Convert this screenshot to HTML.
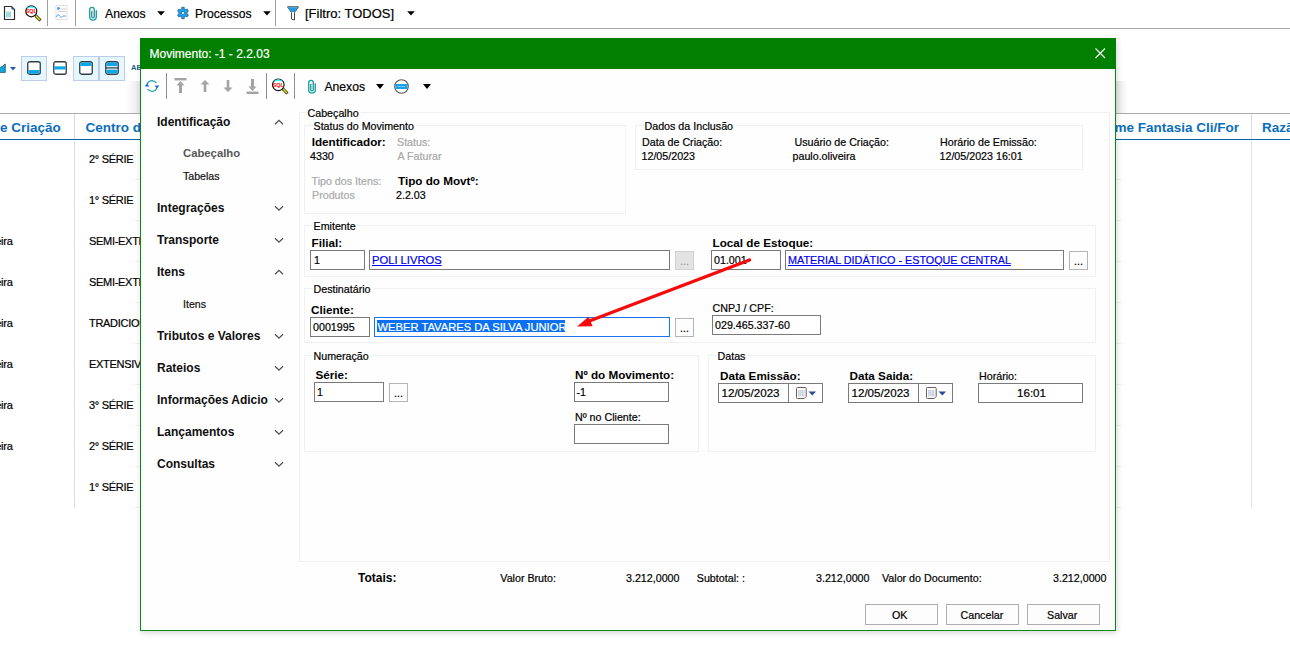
<!DOCTYPE html>
<html><head><meta charset="utf-8">
<style>
html,body{margin:0;padding:0;}
body{width:1290px;height:667px;overflow:hidden;position:relative;background:#fff;font-family:"Liberation Sans", sans-serif;}
.t{position:absolute;white-space:pre;line-height:1;-webkit-text-stroke:0.2px currentColor;}
.r{position:absolute;box-sizing:border-box;}
</style></head><body>
<div class="r" style="left:47px;top:0px;width:1px;height:26px;background:#a0a0a0"></div>
<div class="r" style="left:75px;top:0px;width:1px;height:26px;background:#a0a0a0"></div>
<div class="r" style="left:275px;top:0px;width:1px;height:26px;background:#a0a0a0"></div>
<div class="r" style="left:0px;top:28px;width:1290px;height:1px;background:#a9a9a9"></div>
<div class="t" style="left:105px;top:7.67px;font-size:12.2px;font-weight:normal;color:#000;">Anexos</div>
<div class="t" style="left:195px;top:7.76px;font-size:12.1px;font-weight:normal;color:#000;">Processos</div>
<div class="t" style="left:305px;top:6.60px;font-size:13px;font-weight:normal;color:#000;">[Filtro: TODOS]</div>
<svg class="r" style="left:157px;top:11px" width="8" height="5"><path d="M0.2 0.3H7.8L4 4.6Z" fill="#000"/></svg>
<svg class="r" style="left:263px;top:11px" width="8" height="5"><path d="M0.2 0.3H7.8L4 4.6Z" fill="#000"/></svg>
<svg class="r" style="left:407px;top:11px" width="8" height="5"><path d="M0.2 0.3H7.8L4 4.6Z" fill="#000"/></svg>
<div class="r" style="left:0px;top:113px;width:1290px;height:1px;background:#ababab"></div>
<div class="r" style="left:0px;top:139px;width:1290px;height:1px;background:#0562a8"></div>
<div class="r" style="left:74px;top:114px;width:1px;height:25px;background:#dadada"></div>
<div class="r" style="left:74px;top:141px;width:1px;height:367px;background:#dedede"></div>
<div class="r" style="left:1251px;top:114px;width:1px;height:25px;background:#dadada"></div>
<div class="r" style="left:1251px;top:141px;width:1px;height:367px;background:#e4e4e4"></div>
<div class="t" style="left:0px;top:120.57px;font-size:13.5px;font-weight:bold;color:#0a6ebd;-webkit-text-stroke:0;">e Criação</div>
<div class="t" style="left:85.5px;top:120.57px;font-size:13.5px;font-weight:bold;color:#0a6ebd;-webkit-text-stroke:0;">Centro de Custo</div>
<div class="t" style="left:1106.2px;top:120.57px;font-size:13.5px;font-weight:bold;color:#0a6ebd;-webkit-text-stroke:0;">ome Fantasia Cli/For</div>
<div class="t" style="left:1262px;top:120.57px;font-size:13.5px;font-weight:bold;color:#0a6ebd;-webkit-text-stroke:0;">Razão</div>
<div class="t" style="left:89px;top:153.69px;font-size:11px;font-weight:normal;color:#000;letter-spacing:-0.3px;">2° SÉRIE</div>
<div class="t" style="left:89px;top:194.69px;font-size:11px;font-weight:normal;color:#000;letter-spacing:-0.3px;">1° SÉRIE</div>
<div class="t" style="left:89px;top:235.69px;font-size:11px;font-weight:normal;color:#000;letter-spacing:-0.3px;">SEMI-EXTENSIVO</div>
<div class="t" style="left:-20px;top:235.69px;font-size:11px;font-weight:normal;color:#000;letter-spacing:-0.3px;">oliveira</div>
<div class="t" style="left:89px;top:276.69px;font-size:11px;font-weight:normal;color:#000;letter-spacing:-0.3px;">SEMI-EXTENSIVO</div>
<div class="t" style="left:-20px;top:276.69px;font-size:11px;font-weight:normal;color:#000;letter-spacing:-0.3px;">oliveira</div>
<div class="t" style="left:89px;top:317.69px;font-size:11px;font-weight:normal;color:#000;letter-spacing:-0.3px;">TRADICIONAL</div>
<div class="t" style="left:-20px;top:317.69px;font-size:11px;font-weight:normal;color:#000;letter-spacing:-0.3px;">oliveira</div>
<div class="t" style="left:89px;top:358.69px;font-size:11px;font-weight:normal;color:#000;letter-spacing:-0.3px;">EXTENSIVO</div>
<div class="t" style="left:-20px;top:358.69px;font-size:11px;font-weight:normal;color:#000;letter-spacing:-0.3px;">oliveira</div>
<div class="t" style="left:89px;top:399.69px;font-size:11px;font-weight:normal;color:#000;letter-spacing:-0.3px;">3° SÉRIE</div>
<div class="t" style="left:-20px;top:399.69px;font-size:11px;font-weight:normal;color:#000;letter-spacing:-0.3px;">oliveira</div>
<div class="t" style="left:89px;top:440.69px;font-size:11px;font-weight:normal;color:#000;letter-spacing:-0.3px;">2° SÉRIE</div>
<div class="t" style="left:-20px;top:440.69px;font-size:11px;font-weight:normal;color:#000;letter-spacing:-0.3px;">oliveira</div>
<div class="t" style="left:89px;top:481.69px;font-size:11px;font-weight:normal;color:#000;letter-spacing:-0.3px;">1° SÉRIE</div>
<div class="r" style="left:128px;top:179px;width:12px;height:1px;background:linear-gradient(90deg,rgba(0,0,0,0),rgba(0,0,0,0.07))"></div>
<div class="r" style="left:1116px;top:179px;width:12px;height:1px;background:linear-gradient(90deg,rgba(0,0,0,0.07),rgba(0,0,0,0))"></div>
<div class="r" style="left:128px;top:220px;width:12px;height:1px;background:linear-gradient(90deg,rgba(0,0,0,0),rgba(0,0,0,0.07))"></div>
<div class="r" style="left:1116px;top:220px;width:12px;height:1px;background:linear-gradient(90deg,rgba(0,0,0,0.07),rgba(0,0,0,0))"></div>
<div class="r" style="left:128px;top:261px;width:12px;height:1px;background:linear-gradient(90deg,rgba(0,0,0,0),rgba(0,0,0,0.07))"></div>
<div class="r" style="left:1116px;top:261px;width:12px;height:1px;background:linear-gradient(90deg,rgba(0,0,0,0.07),rgba(0,0,0,0))"></div>
<div class="r" style="left:128px;top:302px;width:12px;height:1px;background:linear-gradient(90deg,rgba(0,0,0,0),rgba(0,0,0,0.07))"></div>
<div class="r" style="left:1116px;top:302px;width:12px;height:1px;background:linear-gradient(90deg,rgba(0,0,0,0.07),rgba(0,0,0,0))"></div>
<div class="r" style="left:128px;top:343px;width:12px;height:1px;background:linear-gradient(90deg,rgba(0,0,0,0),rgba(0,0,0,0.07))"></div>
<div class="r" style="left:1116px;top:343px;width:12px;height:1px;background:linear-gradient(90deg,rgba(0,0,0,0.07),rgba(0,0,0,0))"></div>
<div class="r" style="left:128px;top:384px;width:12px;height:1px;background:linear-gradient(90deg,rgba(0,0,0,0),rgba(0,0,0,0.07))"></div>
<div class="r" style="left:1116px;top:384px;width:12px;height:1px;background:linear-gradient(90deg,rgba(0,0,0,0.07),rgba(0,0,0,0))"></div>
<div class="r" style="left:128px;top:425px;width:12px;height:1px;background:linear-gradient(90deg,rgba(0,0,0,0),rgba(0,0,0,0.07))"></div>
<div class="r" style="left:1116px;top:425px;width:12px;height:1px;background:linear-gradient(90deg,rgba(0,0,0,0.07),rgba(0,0,0,0))"></div>
<div class="r" style="left:128px;top:466px;width:12px;height:1px;background:linear-gradient(90deg,rgba(0,0,0,0),rgba(0,0,0,0.07))"></div>
<div class="r" style="left:1116px;top:466px;width:12px;height:1px;background:linear-gradient(90deg,rgba(0,0,0,0.07),rgba(0,0,0,0))"></div>
<div class="r" style="left:128px;top:507px;width:12px;height:1px;background:linear-gradient(90deg,rgba(0,0,0,0),rgba(0,0,0,0.07))"></div>
<div class="r" style="left:1116px;top:507px;width:12px;height:1px;background:linear-gradient(90deg,rgba(0,0,0,0.07),rgba(0,0,0,0))"></div>
<svg class="r" style="left:3px;top:5px" width="13" height="16" viewBox="0 0 13 16"><path d="M1.5 1.5H8.5L11.5 4.5V14.5H1.5Z" fill="#fff" stroke="#2b2b2b" stroke-width="1.2"/><path d="M8.5 1.5V4.5H11.5Z" fill="#1560b0"/><rect x="3" y="6.5" width="5" height="6" fill="#9fdcdc"/></svg>
<svg class="r" style="left:24px;top:5px" width="18" height="17" viewBox="0 0 18 17"><path d="M11.5 10.5L16.5 15.5" stroke="#222" stroke-width="3"/><path d="M11.8 10.8L16 15" stroke="#f2e200" stroke-width="1.6"/><circle cx="7.3" cy="6.3" r="5.5" fill="#fff" stroke="#111" stroke-width="1.2"/><path d="M3 3.3Q7.3 0.3 11.6 3.3" stroke="#2ee6f0" stroke-width="1.3" fill="none"/><text x="7.3" y="8.4" font-size="5.4" font-weight="bold" fill="#f00" text-anchor="middle" font-family="Liberation Sans">SQL</text></svg>
<svg class="r" style="left:55px;top:4px" width="13" height="17" viewBox="0 0 13 17"><rect x="1" y="1.5" width="11" height="14" fill="none" stroke="#e0e0e0"/><circle cx="3.5" cy="4.5" r="1.4" fill="#4aa0f0"/><path d="M5.5 5H11M3 7.5H11" stroke="#cfcfcf"/><path d="M1 13Q3 9 4.5 12T8 12H11" stroke="#5aa8f0" fill="none"/></svg>
<svg class="r" style="left:88px;top:6px" width="10" height="15" viewBox="0 0 10 15"><path d="M8.3 4.2V10.8A3.3 3.3 0 0 1 1.7 10.8V3.6A2.3 2.3 0 0 1 6.3 3.6V10.6A1.3 1.3 0 0 1 3.7 10.6V5" stroke="#17a0a0" stroke-width="1.35" fill="none"/><path d="M5 3.2V11" stroke="#d8b8b8" stroke-width="0.8"/></svg>
<svg class="r" style="left:176px;top:6px" width="14" height="14" viewBox="-0.8 -0.8 15.6 15.6"><g fill="#16a4f4" stroke="#0d3550" stroke-width="0.6"><path d="M5.6 0.6H8.4V2.4L10.2 3.4L11.7 2.5L13.1 4.9L11.6 5.8V8.2L13.1 9.1L11.7 11.5L10.2 10.6L8.4 11.6V13.4H5.6V11.6L3.8 10.6L2.3 11.5L0.9 9.1L2.4 8.2V5.8L0.9 4.9L2.3 2.5L3.8 3.4L5.6 2.4Z"/></g><circle cx="7" cy="7" r="1.7" fill="#fff" stroke="#2a3a40" stroke-width="0.6"/></svg>
<svg class="r" style="left:287px;top:6px" width="12" height="15" viewBox="0 0 12 15"><path d="M0.5 0.8H11.5L7.5 6.5V14L4.5 13V6.5Z" fill="#fff" stroke="#444" stroke-width="1"/><path d="M1 1.3H11L7.6 6H4.4Z" fill="#1e9be8"/></svg>
<svg class="r" style="left:0px;top:63px" width="7" height="12" viewBox="0 0 7 12"><path d="M-1 4.8L2.2 3.6L5.3 1V9.4H-1Z" fill="#10a8e0" stroke="#244050" stroke-width="0.7"/></svg>
<svg class="r" style="left:10px;top:67px" width="6" height="4"><path d="M0 0H6L3 3.5Z" fill="#1d5fa8"/></svg>
<div class="r" style="left:21px;top:56px;width:26px;height:25px;background:#e6f6fd;border:1px solid #bccbeb"></div>
<div class="r" style="left:73px;top:56px;width:26px;height:25px;background:#e6f6fd;border:1px solid #bccbeb"></div>
<div class="r" style="left:99px;top:56px;width:26px;height:25px;background:#e6f6fd;border:1px solid #bccbeb"></div>
<svg class="r" style="left:27px;top:61px" width="14" height="14" viewBox="0 0 14 14"><rect x="0.75" y="0.75" width="12.5" height="12.5" rx="2" fill="#fff" stroke="#2f3e46" stroke-width="1.3"/><rect x="1.4" y="9" width="11.2" height="3.7" fill="#12a6e6"/></svg>
<svg class="r" style="left:53px;top:61px" width="14" height="14" viewBox="0 0 14 14"><rect x="0.75" y="0.75" width="12.5" height="12.5" rx="2" fill="#fff" stroke="#2f3e46" stroke-width="1.3"/><rect x="1.4" y="5.3" width="11.2" height="3.2" fill="#12a6e6"/></svg>
<svg class="r" style="left:79px;top:61px" width="14" height="14" viewBox="0 0 14 14"><rect x="0.75" y="0.75" width="12.5" height="12.5" rx="2" fill="#fff" stroke="#2f3e46" stroke-width="1.3"/><rect x="1.4" y="1.4" width="11.2" height="3.6" fill="#12a6e6"/></svg>
<svg class="r" style="left:105px;top:61px" width="14" height="14" viewBox="0 0 14 14"><rect x="0.75" y="0.75" width="12.5" height="12.5" rx="2.5" fill="#fff" stroke="#2f3e46" stroke-width="1.3"/><rect x="1.4" y="1.4" width="11.2" height="3.8" fill="#12a6e6"/><rect x="1.4" y="8.6" width="11.2" height="3.8" fill="#12a6e6"/><path d="M1 6.9H13" stroke="#2f3e46" stroke-width="1.3"/></svg>
<div class="t" style="left:131px;top:64.15px;font-size:7.5px;font-weight:bold;color:#1a5f90;-webkit-text-stroke:0;">AB</div>
<div class="r" style="left:126px;top:81px;width:14px;height:32px;background:linear-gradient(90deg,rgba(0,0,0,0),rgba(0,0,0,0.09))"></div>
<div class="r" style="left:1116px;top:81px;width:12px;height:32px;background:linear-gradient(90deg,rgba(0,0,0,0.1),rgba(0,0,0,0))"></div>
<div class="r" style="left:140px;top:38px;width:976px;height:593px;background:#fefefe;border:1px solid #0a8a16;box-shadow:1px 2px 6px rgba(0,0,0,0.16)"></div>
<div class="r" style="left:140px;top:38px;width:976px;height:31px;background:#007f00"></div>
<div class="t" style="left:149.5px;top:47.84px;font-size:12px;font-weight:normal;color:#fff;">Movimento: -1 - 2.2.03</div>
<svg class="r" style="left:1095px;top:48px" width="11" height="11" viewBox="0 0 11 11"><path d="M0.5 0.5L10 10M10 0.5L0.5 10" stroke="#fff" stroke-width="1.1"/></svg>
<div class="r" style="left:166px;top:73px;width:1px;height:26px;background:#8f8f8f"></div>
<div class="r" style="left:266px;top:73px;width:1px;height:26px;background:#8f8f8f"></div>
<div class="r" style="left:294px;top:73px;width:1px;height:26px;background:#8f8f8f"></div>
<svg class="r" style="left:144px;top:79px" width="16" height="14" viewBox="0 0 16 14"><path d="M3 6.5Q3.5 1.8 8 1.6Q10.8 1.6 12.4 4M13 7.5Q12.5 12.2 8 12.4Q5.2 12.4 3.6 10" stroke="#1aa3a8" stroke-width="1.3" fill="none"/><path d="M0.6 7.6H5.4L3 4.6Z" fill="#1a6fd0"/><path d="M10.6 6.4H15.4L13 9.4Z" fill="#1a6fd0"/></svg>
<svg class="r" style="left:174px;top:78px" width="13" height="16" viewBox="0 0 13 16"><rect x="0.5" y="0" width="12" height="2.4" fill="#a3a3a3"/><path d="M6.5 3L10.5 7.5H8V15H5V7.5H2.5Z" fill="#a3a3a3"/></svg>
<svg class="r" style="left:200px;top:80px" width="10" height="12" viewBox="0 0 10 12"><path d="M5 0L9.5 4.5H6.3V12H3.7V4.5H0.5Z" fill="#a3a3a3"/></svg>
<svg class="r" style="left:223px;top:80px" width="10" height="12" viewBox="0 0 10 12"><path d="M5 12L9.5 7.5H6.3V0H3.7V7.5H0.5Z" fill="#a3a3a3"/></svg>
<svg class="r" style="left:246px;top:79px" width="13" height="16" viewBox="0 0 13 16"><rect x="0.5" y="12.6" width="12" height="2.4" fill="#a3a3a3"/><path d="M6.5 12L10.5 7.5H8V0H5V7.5H2.5Z" fill="#a3a3a3"/></svg>
<svg class="r" style="left:271px;top:78px" width="18" height="17" viewBox="0 0 18 17"><path d="M11.5 10.5L16.5 15.5" stroke="#222" stroke-width="3"/><path d="M11.8 10.8L16 15" stroke="#f2e200" stroke-width="1.6"/><circle cx="7.3" cy="6.8" r="5.8" fill="#fff" stroke="#111" stroke-width="1.2"/><path d="M3 3.5Q7.3 0.5 11.6 3.5" stroke="#2ee6f0" stroke-width="1.3" fill="none"/><text x="7.3" y="8.8" font-size="5.4" font-weight="bold" fill="#f00" text-anchor="middle" font-family="Liberation Sans">SQL</text></svg>
<svg class="r" style="left:307px;top:79px" width="10" height="15" viewBox="0 0 10 15"><path d="M8.3 4.2V10.8A3.3 3.3 0 0 1 1.7 10.8V3.6A2.3 2.3 0 0 1 6.3 3.6V10.6A1.3 1.3 0 0 1 3.7 10.6V5" stroke="#17a0a0" stroke-width="1.35" fill="none"/><path d="M5 3.2V11" stroke="#d8b8b8" stroke-width="0.8"/></svg>
<div class="t" style="left:324.4px;top:80.67px;font-size:12.2px;font-weight:normal;color:#000;">Anexos</div>
<svg class="r" style="left:376px;top:84px" width="8" height="5"><path d="M0 0H8L4 5Z" fill="#000"/></svg>
<svg class="r" style="left:394px;top:79px" width="15" height="15" viewBox="0 0 15 15"><circle cx="7.5" cy="7.5" r="6.8" fill="#fff" stroke="#555" stroke-width="1.1"/><rect x="1.5" y="5" width="12" height="5" fill="#1aa0e8"/><path d="M3.5 7.5H11.5" stroke="#cfefff" stroke-width="0.8" stroke-dasharray="1 0.6"/></svg>
<svg class="r" style="left:423px;top:84px" width="8" height="5"><path d="M0 0H8L4 5Z" fill="#000"/></svg>
<div class="t" style="left:157px;top:115.84px;font-size:12px;font-weight:bold;color:#101010;-webkit-text-stroke:0;">Identificação</div>
<svg class="r" style="left:274px;top:119px" width="10" height="7" viewBox="0 0 10 7"><path d="M1 5.3L5 1.3L9 5.3" stroke="#505050" stroke-width="1.3" fill="none"/></svg>
<div class="t" style="left:183px;top:148.43px;font-size:11.3px;font-weight:bold;color:#585858;-webkit-text-stroke:0;">Cabeçalho</div>
<div class="t" style="left:183px;top:171.03px;font-size:10.6px;font-weight:normal;color:#101010;">Tabelas</div>
<div class="t" style="left:157px;top:201.84px;font-size:12px;font-weight:bold;color:#101010;-webkit-text-stroke:0;">Integrações</div>
<svg class="r" style="left:274px;top:205px" width="10" height="7" viewBox="0 0 10 7"><path d="M1 1.2L5 5.2L9 1.2" stroke="#505050" stroke-width="1.3" fill="none"/></svg>
<div class="t" style="left:157px;top:233.84px;font-size:12px;font-weight:bold;color:#101010;-webkit-text-stroke:0;">Transporte</div>
<svg class="r" style="left:274px;top:237px" width="10" height="7" viewBox="0 0 10 7"><path d="M1 1.2L5 5.2L9 1.2" stroke="#505050" stroke-width="1.3" fill="none"/></svg>
<div class="t" style="left:157px;top:265.84px;font-size:12px;font-weight:bold;color:#101010;-webkit-text-stroke:0;">Itens</div>
<svg class="r" style="left:274px;top:269px" width="10" height="7" viewBox="0 0 10 7"><path d="M1 5.3L5 1.3L9 5.3" stroke="#505050" stroke-width="1.3" fill="none"/></svg>
<div class="t" style="left:183px;top:299.03px;font-size:10.6px;font-weight:normal;color:#101010;">Itens</div>
<div class="t" style="left:157px;top:329.84px;font-size:12px;font-weight:bold;color:#101010;-webkit-text-stroke:0;">Tributos e Valores</div>
<svg class="r" style="left:274px;top:333px" width="10" height="7" viewBox="0 0 10 7"><path d="M1 1.2L5 5.2L9 1.2" stroke="#505050" stroke-width="1.3" fill="none"/></svg>
<div class="t" style="left:157px;top:361.84px;font-size:12px;font-weight:bold;color:#101010;-webkit-text-stroke:0;">Rateios</div>
<svg class="r" style="left:274px;top:365px" width="10" height="7" viewBox="0 0 10 7"><path d="M1 1.2L5 5.2L9 1.2" stroke="#505050" stroke-width="1.3" fill="none"/></svg>
<div class="t" style="left:157px;top:393.84px;font-size:12px;font-weight:bold;color:#101010;-webkit-text-stroke:0;">Informações Adicio</div>
<svg class="r" style="left:274px;top:397px" width="10" height="7" viewBox="0 0 10 7"><path d="M1 1.2L5 5.2L9 1.2" stroke="#505050" stroke-width="1.3" fill="none"/></svg>
<div class="t" style="left:157px;top:425.84px;font-size:12px;font-weight:bold;color:#101010;-webkit-text-stroke:0;">Lançamentos</div>
<svg class="r" style="left:274px;top:429px" width="10" height="7" viewBox="0 0 10 7"><path d="M1 1.2L5 5.2L9 1.2" stroke="#505050" stroke-width="1.3" fill="none"/></svg>
<div class="t" style="left:157px;top:457.84px;font-size:12px;font-weight:bold;color:#101010;-webkit-text-stroke:0;">Consultas</div>
<svg class="r" style="left:274px;top:461px" width="10" height="7" viewBox="0 0 10 7"><path d="M1 1.2L5 5.2L9 1.2" stroke="#505050" stroke-width="1.3" fill="none"/></svg>
<div class="r" style="left:299px;top:112px;width:811px;height:450px;border:1px solid #f1f1f1"></div>
<div class="t" style="left:307.5px;top:107.94px;font-size:10.7px;font-weight:normal;color:#000;margin-left:-1px;"><span style="background:#fefefe;padding:0 2px 0 1px">Cabeçalho</span></div>
<div class="r" style="left:304px;top:125px;width:322px;height:89px;border:1px solid #f1f1f1"></div>
<div class="t" style="left:313.5px;top:120.94px;font-size:10.7px;font-weight:normal;color:#000;margin-left:-1px;"><span style="background:#fefefe;padding:0 2px 0 1px">Status do Movimento</span></div>
<div class="r" style="left:635px;top:125px;width:448px;height:45px;border:1px solid #f1f1f1"></div>
<div class="t" style="left:644.5px;top:120.94px;font-size:10.7px;font-weight:normal;color:#000;margin-left:-1px;"><span style="background:#fefefe;padding:0 2px 0 1px">Dados da Inclusão</span></div>
<div class="r" style="left:304px;top:225px;width:792px;height:52px;border:1px solid #f1f1f1"></div>
<div class="t" style="left:313.5px;top:220.94px;font-size:10.7px;font-weight:normal;color:#000;margin-left:-1px;"><span style="background:#fefefe;padding:0 2px 0 1px">Emitente</span></div>
<div class="r" style="left:304px;top:288px;width:792px;height:55px;border:1px solid #f1f1f1"></div>
<div class="t" style="left:313.5px;top:283.94px;font-size:10.7px;font-weight:normal;color:#000;margin-left:-1px;"><span style="background:#fefefe;padding:0 2px 0 1px">Destinatário</span></div>
<div class="r" style="left:304px;top:355px;width:395px;height:97px;border:1px solid #f1f1f1"></div>
<div class="t" style="left:313.5px;top:350.94px;font-size:10.7px;font-weight:normal;color:#000;margin-left:-1px;"><span style="background:#fefefe;padding:0 2px 0 1px">Numeração</span></div>
<div class="r" style="left:708px;top:355px;width:388px;height:97px;border:1px solid #f1f1f1"></div>
<div class="t" style="left:717.5px;top:350.94px;font-size:10.7px;font-weight:normal;color:#000;margin-left:-1px;"><span style="background:#fefefe;padding:0 2px 0 1px">Datas</span></div>
<div class="t" style="left:311.7px;top:136.10px;font-size:11.7px;font-weight:bold;color:#000;-webkit-text-stroke:0;">Identificador:</div>
<div class="t" style="left:310px;top:150.94px;font-size:10.7px;font-weight:normal;color:#000;">4330</div>
<div class="t" style="left:397px;top:136.94px;font-size:10.7px;font-weight:normal;color:#a8a8a8;">Status:</div>
<div class="t" style="left:397.5px;top:150.94px;font-size:10.7px;font-weight:normal;color:#a8a8a8;">A Faturar</div>
<div class="t" style="left:311.5px;top:175.94px;font-size:10.7px;font-weight:normal;color:#a8a8a8;">Tipo dos Itens:</div>
<div class="t" style="left:312px;top:189.94px;font-size:10.7px;font-weight:normal;color:#a8a8a8;">Produtos</div>
<div class="t" style="left:398px;top:175.10px;font-size:11.7px;font-weight:bold;color:#000;-webkit-text-stroke:0;">Tipo do Movtº:</div>
<div class="t" style="left:396px;top:189.94px;font-size:10.7px;font-weight:normal;color:#000;">2.2.03</div>
<div class="t" style="left:642px;top:136.94px;font-size:10.7px;font-weight:normal;color:#000;">Data de Criação:</div>
<div class="t" style="left:641.5px;top:150.94px;font-size:10.7px;font-weight:normal;color:#000;">12/05/2023</div>
<div class="t" style="left:794.5px;top:136.94px;font-size:10.7px;font-weight:normal;color:#000;">Usuário de Criação:</div>
<div class="t" style="left:792.5px;top:150.94px;font-size:10.7px;font-weight:normal;color:#000;">paulo.oliveira</div>
<div class="t" style="left:940px;top:136.94px;font-size:10.7px;font-weight:normal;color:#000;">Horário de Emissão:</div>
<div class="t" style="left:939.5px;top:150.94px;font-size:10.7px;font-weight:normal;color:#000;">12/05/2023 16:01</div>
<div class="t" style="left:311.5px;top:237.10px;font-size:11.7px;font-weight:bold;color:#000;-webkit-text-stroke:0;">Filial:</div>
<div class="r" style="left:310px;top:250px;width:55px;height:20px;background:#fff;border:1px solid #7a7a7a"></div>
<div class="t" style="left:314px;top:254.94px;font-size:10.7px;font-weight:normal;color:#000;">1</div>
<div class="r" style="left:369px;top:250px;width:301px;height:20px;background:#fff;border:1px solid #7a7a7a"></div>
<div class="t" style="left:372px;top:254.52px;font-size:11.2px;font-weight:normal;color:#0000ee;"><u>POLI LIVROS</u></div>
<div class="r" style="left:675px;top:251px;width:19px;height:19px;background:#e3e3e3;border:1px solid #d0d0d0"></div>
<div class="t" style="left:680px;top:255.94px;font-size:10.7px;font-weight:normal;color:#9a9a9a;">...</div>
<div class="t" style="left:712.5px;top:237.10px;font-size:11.7px;font-weight:bold;color:#000;-webkit-text-stroke:0;">Local de Estoque:</div>
<div class="r" style="left:711px;top:250px;width:70px;height:20px;background:#fff;border:1px solid #7a7a7a"></div>
<div class="t" style="left:714px;top:254.94px;font-size:10.7px;font-weight:normal;color:#000;">01.001</div>
<div class="r" style="left:785px;top:250px;width:279px;height:20px;background:#fff;border:1px solid #7a7a7a"></div>
<div class="t" style="left:788px;top:254.86px;font-size:10.8px;font-weight:normal;color:#0000ee;"><u>MATERIAL DIDÁTICO - ESTOQUE CENTRAL</u></div>
<div class="r" style="left:1069px;top:251px;width:19px;height:19px;background:#fdfdfd;border:1px solid #b4b4b4"></div>
<div class="t" style="left:1074px;top:255.94px;font-size:10.7px;font-weight:normal;color:#000;">...</div>
<div class="t" style="left:311px;top:304.10px;font-size:11.7px;font-weight:bold;color:#000;-webkit-text-stroke:0;">Cliente:</div>
<div class="r" style="left:310px;top:317px;width:60px;height:20px;background:#fff;border:1px solid #7a7a7a"></div>
<div class="t" style="left:313px;top:321.94px;font-size:10.7px;font-weight:normal;color:#000;">0001995</div>
<div class="r" style="left:374px;top:317px;width:296px;height:20px;background:#fff;border:1px solid #1a74f0"></div>
<div class="r" style="left:377px;top:320px;width:188px;height:12px;background:#0a6ff2"></div>
<div class="t" style="left:377.5px;top:321.52px;font-size:11.2px;font-weight:normal;color:#fff;">WEBER TAVARES DA SILVA JUNIOR</div>
<div class="r" style="left:675px;top:318px;width:19px;height:19px;background:#fdfdfd;border:1px solid #b4b4b4"></div>
<div class="t" style="left:680px;top:322.94px;font-size:10.7px;font-weight:normal;color:#000;">...</div>
<div class="t" style="left:712.5px;top:302.94px;font-size:10.7px;font-weight:normal;color:#000;">CNPJ / CPF:</div>
<div class="r" style="left:712px;top:315px;width:109px;height:20px;background:#fff;border:1px solid #7a7a7a"></div>
<div class="t" style="left:715px;top:319.94px;font-size:10.7px;font-weight:normal;color:#000;">029.465.337-60</div>
<div class="t" style="left:315.5px;top:369.10px;font-size:11.7px;font-weight:bold;color:#000;-webkit-text-stroke:0;">Série:</div>
<div class="r" style="left:314px;top:382px;width:70px;height:20px;background:#fff;border:1px solid #7a7a7a"></div>
<div class="t" style="left:317px;top:386.94px;font-size:10.7px;font-weight:normal;color:#000;">1</div>
<div class="r" style="left:389px;top:383px;width:19px;height:19px;background:#fdfdfd;border:1px solid #b4b4b4"></div>
<div class="t" style="left:394px;top:387.94px;font-size:10.7px;font-weight:normal;color:#000;">...</div>
<div class="t" style="left:575px;top:369.10px;font-size:11.7px;font-weight:bold;color:#000;-webkit-text-stroke:0;">Nº do Movimento:</div>
<div class="r" style="left:574px;top:382px;width:95px;height:20px;background:#fff;border:1px solid #7a7a7a"></div>
<div class="t" style="left:576.5px;top:386.94px;font-size:10.7px;font-weight:normal;color:#000;">-1</div>
<div class="t" style="left:575px;top:411.94px;font-size:10.7px;font-weight:normal;color:#000;">Nº no Cliente:</div>
<div class="r" style="left:574px;top:424px;width:95px;height:20px;background:#fff;border:1px solid #7a7a7a"></div>
<div class="t" style="left:720px;top:370.10px;font-size:11.7px;font-weight:bold;color:#000;-webkit-text-stroke:0;">Data Emissão:</div>
<div class="r" style="left:718px;top:383px;width:105px;height:20px;background:#fff;border:1px solid #7a7a7a"></div>
<div class="r" style="left:788px;top:383px;width:1px;height:20px;background:#7a7a7a"></div>
<div class="t" style="left:721.5px;top:387.48px;font-size:11.6px;font-weight:normal;color:#000;">12/05/2023</div>
<svg class="r" style="left:796px;top:387px" width="21" height="13" viewBox="0 0 21 13"><path d="M1.5 0.5H9.2Q10.2 0.5 10.2 1.5V9.5L8.2 11.5H1.5Q0.5 11.5 0.5 10.5V1.5Q0.5 0.5 1.5 0.5Z" fill="#fff" stroke="#6e5a52" stroke-width="1"/><rect x="2" y="3" width="6.5" height="6.5" fill="#c9d3e3"/><path d="M3.3 4.3h.9M5.3 4.3h.9M7.3 4.3h.5M3.3 6.3h.9M5.3 6.3h.9M7.3 6.3h.5M3.3 8.3h.9M5.3 8.3h.9" stroke="#fff" stroke-width="0.9"/><path d="M12.5 4.6H20L16.25 8.4Z" fill="#2b4a92"/></svg>
<div class="t" style="left:849.5px;top:370.10px;font-size:11.7px;font-weight:bold;color:#000;-webkit-text-stroke:0;">Data Saida:</div>
<div class="r" style="left:848px;top:383px;width:105px;height:20px;background:#fff;border:1px solid #7a7a7a"></div>
<div class="r" style="left:918px;top:383px;width:1px;height:20px;background:#7a7a7a"></div>
<div class="t" style="left:851.5px;top:387.48px;font-size:11.6px;font-weight:normal;color:#000;">12/05/2023</div>
<svg class="r" style="left:926px;top:387px" width="21" height="13" viewBox="0 0 21 13"><path d="M1.5 0.5H9.2Q10.2 0.5 10.2 1.5V9.5L8.2 11.5H1.5Q0.5 11.5 0.5 10.5V1.5Q0.5 0.5 1.5 0.5Z" fill="#fff" stroke="#6e5a52" stroke-width="1"/><rect x="2" y="3" width="6.5" height="6.5" fill="#c9d3e3"/><path d="M3.3 4.3h.9M5.3 4.3h.9M7.3 4.3h.5M3.3 6.3h.9M5.3 6.3h.9M7.3 6.3h.5M3.3 8.3h.9M5.3 8.3h.9" stroke="#fff" stroke-width="0.9"/><path d="M12.5 4.6H20L16.25 8.4Z" fill="#2b4a92"/></svg>
<div class="t" style="left:979px;top:370.94px;font-size:10.7px;font-weight:normal;color:#000;">Horário:</div>
<div class="r" style="left:978px;top:383px;width:105px;height:20px;background:#fff;border:1px solid #7a7a7a"></div>
<div class="t" style="left:1017px;top:387.18px;font-size:11.6px;font-weight:normal;color:#000;">16:01</div>
<svg class="r" style="left:560px;top:250px" width="200" height="90" viewBox="560 250 200 90"><path d="M749.5 260L588 321.5" stroke="#f80a0a" stroke-width="3.4" stroke-linecap="round"/><path d="M577 326.6L588.6 316.8L592.6 326.2Z" fill="#f80a0a"/></svg>
<div class="t" style="left:358px;top:571.84px;font-size:12px;font-weight:bold;color:#000;-webkit-text-stroke:0;">Totais:</div>
<div class="t" style="left:500.3px;top:572.94px;font-size:10.7px;font-weight:normal;color:#000;">Valor Bruto:</div>
<div class="t" style="left:626px;top:572.94px;font-size:10.7px;font-weight:normal;color:#000;">3.212,0000</div>
<div class="t" style="left:696.8px;top:572.94px;font-size:10.7px;font-weight:normal;color:#000;">Subtotal: :</div>
<div class="t" style="left:816px;top:572.94px;font-size:10.7px;font-weight:normal;color:#000;">3.212,0000</div>
<div class="t" style="left:882px;top:572.94px;font-size:10.7px;font-weight:normal;color:#000;">Valor do Documento:</div>
<div class="t" style="left:1053px;top:572.94px;font-size:10.7px;font-weight:normal;color:#000;">3.212,0000</div>
<div class="r" style="left:865px;top:604px;width:73px;height:21px;background:#fdfdfd;border:1px solid #adadad"></div>
<div class="t" style="left:892px;top:609.94px;font-size:10.7px;font-weight:normal;color:#000;">OK</div>
<div class="r" style="left:946px;top:604px;width:73px;height:21px;background:#fdfdfd;border:1px solid #adadad"></div>
<div class="t" style="left:960.5px;top:609.94px;font-size:10.7px;font-weight:normal;color:#000;">Cancelar</div>
<div class="r" style="left:1027px;top:604px;width:73px;height:21px;background:#fdfdfd;border:1px solid #adadad"></div>
<div class="t" style="left:1047px;top:609.94px;font-size:10.7px;font-weight:normal;color:#000;">Salvar</div>
</body></html>
